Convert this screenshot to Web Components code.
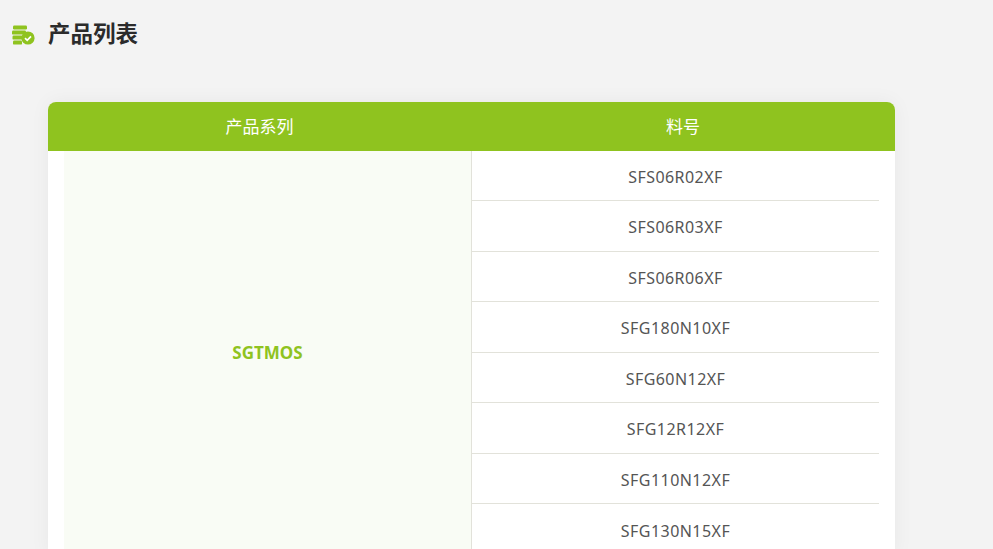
<!DOCTYPE html>
<html lang="zh">
<head>
<meta charset="utf-8">
<title>产品列表</title>
<style>
  html, body { margin: 0; height: 100%; overflow: hidden; background: #f3f3f3; }
  body { font-family: "Noto Sans", "Noto Sans CJK SC", sans-serif; }
</style>
</head>
<body>
<product-page>
  <section-title>产品列表</section-title>
  <product-table head-a="产品系列" head-b="料号" series="SGTMOS">
    <part-row>SFS06R02XF</part-row>
    <part-row>SFS06R03XF</part-row>
    <part-row>SFS06R06XF</part-row>
    <part-row>SFG180N10XF</part-row>
    <part-row>SFG60N12XF</part-row>
    <part-row>SFG12R12XF</part-row>
    <part-row>SFG110N12XF</part-row>
    <part-row>SFG130N15XF</part-row>
  </product-table>
</product-page>

<script>
class ProductPage extends HTMLElement {
  constructor() {
    super();
    this.attachShadow({ mode: 'open' }).innerHTML = `
      <style>
        :host { display: flex; flex-direction: column; padding: 0 0 0 12px; gap: 38px; width: 883px; }
      </style>
      <slot></slot>`;
  }
}

class SectionTitle extends HTMLElement {
  constructor() {
    super();
    this.attachShadow({ mode: 'open' }).innerHTML = `
      <style>
        :host { display: flex; align-items: center; gap: 13px; height: 64px;
          color: #2b2b2b; font: 700 22.5px/30px "Noto Sans CJK SC", sans-serif; }
        svg { width: 23px; height: 20px; flex: none; margin-top: 5px; }
      </style>
      <svg viewBox="0 0 23 20">
        <g fill="#8fc31f">
          <rect x="1" y="0.5" width="14" height="4" rx="1.2"/>
          <rect x="0" y="5.6" width="14" height="4" rx="1.2"/>
          <rect x="0.5" y="10.6" width="10" height="4" rx="1.2"/>
          <rect x="1" y="15.6" width="9" height="4" rx="1.2"/>
          <circle cx="16" cy="13" r="6.6"/>
        </g>
        <path d="M13 13.2l2.2 2.2 3.8-4" fill="none" stroke="#fff" stroke-width="1.7"/>
      </svg>
      <span><slot></slot></span>`;
  }
}

class ProductTable extends HTMLElement {
  constructor() {
    super();
    this.attachShadow({ mode: 'open' }).innerHTML = `
      <style>
        :host { display: block; margin-left: 36px; width: 847px; background: #fff;
          border-radius: 8px 8px 0 0; box-shadow: 0 0 20px rgba(0,0,0,.05); }
        .head { display: grid; grid-template-columns: 423px 424px; height: 49px;
          background: #8fc31f; color: #fff; border-radius: 8px 8px 0 0;
          font: 400 17px/48px "Noto Sans CJK SC", sans-serif; text-align: center; }
        .body { display: grid; grid-template-columns: 407px 1fr; padding: 0 16px; }
        .series { display: flex; align-items: center; justify-content: center;
          background: #f9fcf5; color: #8fc31f; font-weight: 700; font-size: 17px; }
        .parts { border-left: 1px solid #e2e2da; }
      </style>
      <div class="head"><div class="a"></div><div class="b"></div></div>
      <div class="body">
        <div class="series"></div>
        <div class="parts"><slot></slot></div>
      </div>`;
  }

  connectedCallback() {
    this.shadowRoot.querySelector('.a').textContent = this.getAttribute('head-a');
    this.shadowRoot.querySelector('.b').textContent = this.getAttribute('head-b');
    this.shadowRoot.querySelector('.series').textContent = this.getAttribute('series');
  }
}

class PartRow extends HTMLElement {
  constructor() {
    super();
    this.attachShadow({ mode: 'open' }).innerHTML = `
      <style>
        :host { display: flex; align-items: center; justify-content: center; box-sizing: border-box;
          height: 50.5px; padding-top: 3px; color: #555; font-size: 16px; letter-spacing: .45px;
          border-bottom: 1px solid #e2e2da; }
        :host(:first-child) { height: 50px; padding-top: 2px; }
        :host(:last-child) { border-bottom: 0; }
      </style>
      <slot></slot>`;
  }
}

customElements.define('product-page', ProductPage);
customElements.define('section-title', SectionTitle);
customElements.define('product-table', ProductTable);
customElements.define('part-row', PartRow);
</script>
</body>
</html>
